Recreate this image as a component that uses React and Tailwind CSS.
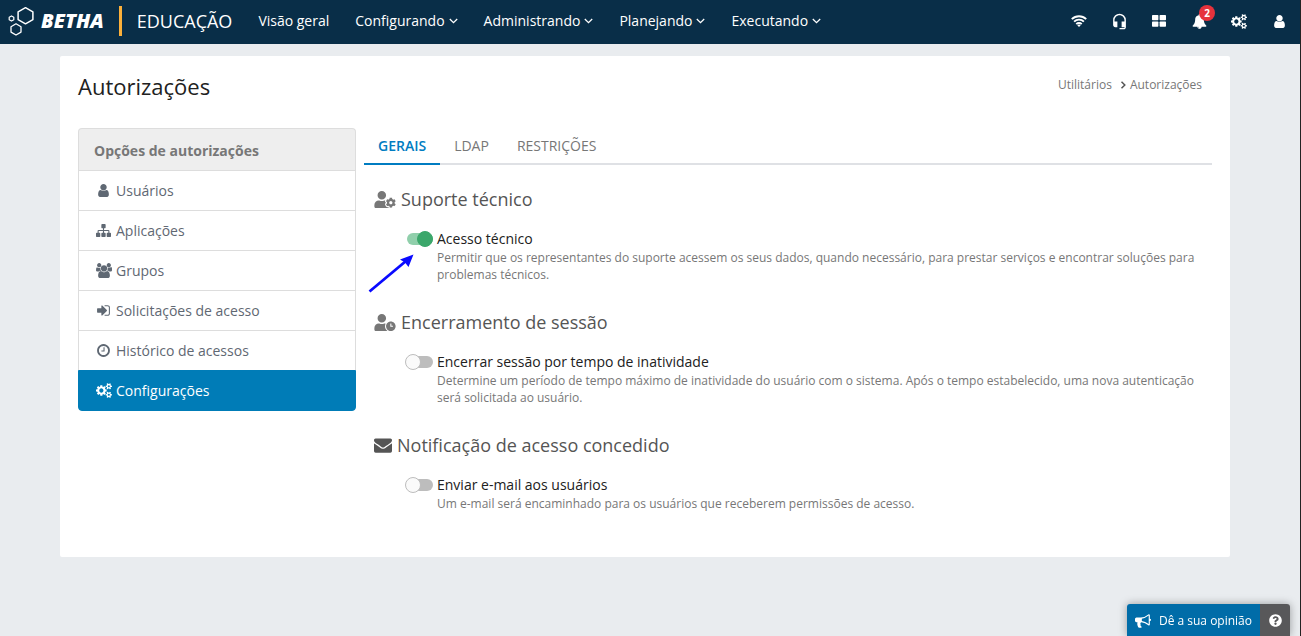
import { FaQuestionCircle, FaUserClock, FaUserCog } from 'react-icons/fa'
import { MdHeadsetMic } from 'react-icons/md'

const paths = {
  user: 'M1536 1399q0 109-62.5 187t-150.5 78h-854q-88 0-150.5-78t-62.5-187q0-85 8.5-160.5t31.5-152 58.5-131 94-89 134.5-34.5q131 128 313 128t313-128q76 0 134.5 34.5t94 89 58.5 131 31.5 152 8.5 160.5zm-256-887q0 159-112.5 271.5t-271.5 112.5-271.5-112.5-112.5-271.5 112.5-271.5 271.5-112.5 271.5 112.5 112.5 271.5z',
  sitemap: 'M1792 1248v320q0 40-28 68t-68 28h-320q-40 0-68-28t-28-68v-320q0-40 28-68t68-28h96v-192h-512v192h96q40 0 68 28t28 68v320q0 40-28 68t-68 28h-320q-40 0-68-28t-28-68v-320q0-40 28-68t68-28h96v-192h-512v192h96q40 0 68 28t28 68v320q0 40-28 68t-68 28h-320q-40 0-68-28t-28-68v-320q0-40 28-68t68-28h96v-192q0-52 38-90t90-38h512v-192h-96q-40 0-68-28t-28-68v-320q0-40 28-68t68-28h320q40 0 68 28t28 68v320q0 40-28 68t-68 28h-96v192h512q52 0 90 38t38 90v192h96q40 0 68 28t28 68z',
  users: 'M529 896q-162 5-265 128h-134q-82 0-138-40.5t-56-118.5q0-353 124-353 6 0 43.5 21t97.5 42.5 119 21.5q67 0 133-23-5 37-5 66 0 159 93 293zm1071 637q0 120-73 189.5t-194 69.5h-874q-121 0-194-69.5t-73-189.5q0-53 3.5-103.5t14-109 26.5-108.5 43-97.5 62-81 85.5-53.5 111.5-20q10 0 43 21.5t73 48 107 48 135 21.5 135-21.5 107-48 73-48 43-21.5q61 0 111.5 20t85.5 53.5 62 81 43 97.5 26.5 108.5 14 109 3.5 103.5zm-1024-1277q0 106-75 181t-181 75-181-75-75-181 75-181 181-75 181 75 75 181zm704 384q0 159-112.5 271.5t-271.5 112.5-271.5-112.5-112.5-271.5 112.5-271.5 271.5-112.5 271.5 112.5 112.5 271.5zm576 225q0 78-56 118.5t-138 40.5h-134q-103-123-265-128 93-134 93-293 0-29-5-66 66 23 133 23 59 0 119-21.5t97.5-42.5 43.5-21q124 0 124 353zm-128-609q0 106-75 181t-181 75-181-75-75-181 75-181 181-75 181 75 75 181z',
  signIn: 'M1312 896q0 26-19 45l-544 544q-19 19-45 19t-45-19-19-45v-288h-448q-26 0-45-19t-19-45v-384q0-26 19-45t45-19h448v-288q0-26 19-45t45-19 45 19l544 544q19 19 19 45zm352-352v704q0 119-84.5 203.5t-203.5 84.5h-320q-13 0-22.5-9.5t-9.5-22.5q0-4-1-20t-.5-26.5 3-23.5 10-19.5 20.5-6.5h320q66 0 113-47t47-113v-704q0-66-47-113t-113-47h-312l-11.5-1-11.5-3-8-5.5-7-9-2-13.5q0-4-1-20t-.5-26.5 3-23.5 10-19.5 20.5-6.5h320q119 0 203.5 84.5t84.5 203.5z',
  clock: 'M1024 544v448q0 14-9 23t-23 9h-320q-14 0-23-9t-9-23v-64q0-14 9-23t23-9h224v-352q0-14 9-23t23-9h64q14 0 23 9t9 23zm416 352q0-148-73-273t-198-198-273-73-273 73-198 198-73 273 73 273 198 198 273 73 273-73 198-198 73-273zm224 0q0 209-103 385.5t-279.5 279.5-385.5 103-385.5-103-279.5-279.5-103-385.5 103-385.5 279.5-279.5 385.5-103 385.5 103 279.5 279.5 103 385.5z',
  cogs: 'M896 896q0-106-75-181t-181-75-181 75-75 181 75 181 181 75 181-75 75-181zm768 512q0-52-38-90t-90-38-90 38-38 90q0 53 37.5 90.5t90.5 37.5 90.5-37.5 37.5-90.5zm0-1024q0-52-38-90t-90-38-90 38-38 90q0 53 37.5 90.5t90.5 37.5 90.5-37.5 37.5-90.5zm-384 421v185q0 10-7 19.5t-16 10.5l-155 24q-11 35-32 76 34 48 90 115 7 11 7 20 0 12-7 19-23 30-82.5 89.5t-78.5 59.5q-11 0-21-7l-115-90q-37 19-77 31-11 108-23 155-7 24-30 24h-186q-11 0-20-7.5t-10-17.5l-23-153q-34-10-75-31l-118 89q-7 7-20 7-11 0-21-8-144-133-144-160 0-9 7-19 10-14 41-53t47-61q-23-44-35-82l-152-24q-10-1-17-9.5t-7-19.5v-185q0-10 7-19.5t16-10.5l155-24q11-35 32-76-34-48-90-115-7-11-7-20 0-12 7-20 22-30 82-89t79-59q11 0 21 7l115 90q34-18 77-32 11-108 23-154 7-24 30-24h186q11 0 20 7.5t10 17.5l23 153q34 10 75 31l118-89q8-7 20-7 11 0 21 8 144 133 144 160 0 8-7 19-12 16-42 54t-45 60q23 48 34 82l152 23q10 2 17 10.5t7 19.5zm640 533v140q0 16-149 31-12 27-30 52 51 113 51 138 0 4-4 7-122 71-124 71-8 0-46-47t-52-68q-20 2-30 2t-30-2q-14 21-52 68t-46 47q-2 0-124-71-4-3-4-7 0-25 51-138-18-25-30-52-149-15-149-31v-140q0-16 149-31 13-29 30-52-51-113-51-138 0-4 4-7 4-2 35-20t59-34 30-16q8 0 46 46.5t52 67.5q20-2 30-2t30 2q51-71 92-112l6-2q4 0 124 70 4 3 4 7 0 25-51 138 17 23 30 52 149 15 149 31zm0-1024v140q0 16-149 31-12 27-30 52 51 113 51 138 0 4-4 7-122 71-124 71-8 0-46-47t-52-68q-20 2-30 2t-30-2q-14 21-52 68t-46 47q-2 0-124-71-4-3-4-7 0-25 51-138-18-25-30-52-149-15-149-31v-140q0-16 149-31 13-29 30-52-51-113-51-138 0-4 4-7 4-2 35-20t59-34 30-16q8 0 46 46.5t52 67.5q20-2 30-2t30 2q51-71 92-112l6-2q4 0 124 70 4 3 4 7 0 25-51 138 17 23 30 52 149 15 149 31z',
  bell: 'M912 1696q0-16-16-16-59 0-101.5-42.5t-42.5-101.5q0-16-16-16t-16 16q0 73 51.5 124.5t124.5 51.5q16 0 16-16zm816-288q0 52-38 90t-90 38h-448q0 106-75 181t-181 75-181-75-75-181h-448q-52 0-90-38t-38-90q50-42 91-88t85-119.5 74.5-158.5 50-206 19.5-260q0-152 117-282.5t307-158.5q-8-19-8-39 0-40 28-68t68-28 68 28 28 68q0 20-8 39 190 28 307 158.5t117 282.5q0 139 19.5 260t50 206 74.5 158.5 85 119.5 91 88z',
  bullhorn: 'M1664 640q53 0 90.5 37.5t37.5 90.5-37.5 90.5-90.5 37.5v384q0 52-38 90t-90 38q-417-347-812-380-58 19-91 66t-31 100.5 40 92.5q-20 33-23 65.5t6 58 33.5 55 48 50 61.5 50.5q-29 58-111.5 83t-168.5 11.5-132-55.5q-7-23-29.5-87.5t-32-94.5-23-89-15-101 3.5-98.5 22-110.5h-122q-66 0-113-47t-47-113v-192q0-66 47-113t113-47h480q435 0 896-384 52 0 90 38t38 90v384zm-128 604v-954q-394 302-768 343v270q377 42 768 341z',
  envelope: 'M1792 710v794q0 66-47 113t-113 47h-1472q-66 0-113-47t-47-113v-794q44 49 101 87 362 246 497 345 57 42 92.5 65.5t94.5 48 110 24.5h2q51 0 110-24.5t94.5-48 92.5-65.5q170-123 498-345 57-39 100-87zm0-294q0 79-49 151t-122 123q-376 261-468 325-10 7-42.5 31t-54 38.5-52 32.5-57.5 27-50 9h-2q-23 0-50-9t-57.5-27-52-32.5-54-38.5-42.5-31q-91-64-262-182.5t-205-142.5q-62-42-117-115.5t-55-136.5q0-78 41.5-130t118.5-52h1472q65 0 112.5 47t47.5 113z',
}

const boxes = { users: '-64 0 1920 1792', cogs: '0 0 1920 1792' }

function Icon({ name, className = 'w-[15px] h-[15px]' }) {
  return (
    <svg viewBox={boxes[name] || '0 0 1792 1792'} className={`shrink-0 ${className}`} fill="currentColor" aria-hidden="true">
      <path d={paths[name]} />
    </svg>
  )
}

function Wifi() {
  return (
    <svg viewBox="0 0 16 12" className="w-4 h-3" fill="none" stroke="currentColor" strokeWidth="1.9" aria-hidden="true">
      <path d="M.8 4.2a10.200 10.200 0 0 1 14.400 0M3.100 6.700a6.900 6.900 0 0 1 9.800 0M5.300 9.200a3.800 3.800 0 0 1 5.400 0" />
      <path d="M8 12 6.300 10.300a2.400 2.400 0 0 1 3.400 0z" fill="currentColor" stroke="none" />
    </svg>
  )
}

function Tiles() {
  return (
    <svg viewBox="0 0 14 12" className="w-[14px] h-3" fill="currentColor" aria-hidden="true">
      <rect width="6.4" height="5.3" rx=".7" />
      <rect x="7.6" width="6.4" height="5.3" rx=".7" />
      <rect y="6.5" width="6.4" height="5.3" rx=".7" />
      <rect x="7.6" y="6.5" width="6.4" height="5.3" rx=".7" />
    </svg>
  )
}

function Chevron() {
  return (
    <svg viewBox="0 0 9 6" className="w-[9px] h-[6px]" fill="none" stroke="currentColor" strokeWidth="1.3" aria-hidden="true">
      <path d="M.8 1l3.7 3.6L8.2 1" />
    </svg>
  )
}

function Logo() {
  return (
    <a href="#" className="flex items-center gap-[6px]">
      <svg viewBox="0 0 27 30" className="w-[27px] h-[30px]" fill="none" stroke="currentColor" strokeWidth="1.5" strokeLinejoin="round" aria-hidden="true">
        <path d="M17.5 1.700l7.400 4.200v7.700l-7.400 4.200-7.400-4.200V5.900z" />
        <path d="M8 17.800l5 2.900v5.400l-5 2.900-5-2.900v-5.400z" strokeWidth="1.3" />
        <path d="M3.5 9.900l2.300 1.300v2.600l-2.300 1.300-2.300-1.300v-2.600z" strokeWidth="1.2" />
      </svg>
      <span className="text-xl leading-6 font-extrabold italic">BETHA</span>
    </a>
  )
}

const menus = ['Configurando', 'Administrando', 'Planejando', 'Executando']

function Header() {
  return (
    <header className="h-11 bg-[#092e48] text-white flex items-center pl-2 pr-px pb-[2px]">
      <Logo />
      <span className="w-[3px] h-[30px] bg-[#fbb03b] ml-[15px]" />
      <span className="text-[18px] leading-6 ml-[15px]">EDUCAÇÃO</span>
      <nav className="flex items-center gap-[26px] ml-[26px] text-sm">
        <a href="#">Visão geral</a>
        {menus.map((m) => (
          <button key={m} className="flex items-center gap-1">{m}<Chevron /></button>
        ))}
      </nav>
      <div className="flex ml-auto">
        <button aria-label="Conexão" className="w-10 h-10 flex items-center justify-center"><Wifi /></button>
        <button aria-label="Suporte" className="w-10 h-10 flex items-center justify-center"><MdHeadsetMic className="w-[17px] h-[17px]" /></button>
        <button aria-label="Aplicativos" className="w-10 h-10 flex items-center justify-center"><Tiles /></button>
        <button aria-label="Notificações" className="relative w-10 h-10 flex items-center justify-center">
          <Icon name="bell" />
          <span className="absolute top-1 right-1 w-4 h-4 rounded-full bg-[#e6323c] text-[10px] leading-4 font-bold">2</span>
        </button>
        <button aria-label="Ajustes" className="w-10 h-10 flex items-center justify-center"><Icon name="cogs" className="w-4 h-[15px]" /></button>
        <button aria-label="Perfil" className="w-10 h-10 flex items-center justify-center"><Icon name="user" /></button>
      </div>
    </header>
  )
}

const options = [
  { icon: 'user', label: 'Usuários' },
  { icon: 'sitemap', label: 'Aplicações' },
  { icon: 'users', label: 'Grupos' },
  { icon: 'signIn', label: 'Solicitações de acesso' },
  { icon: 'clock', label: 'Histórico de acessos' },
  { icon: 'cogs', label: 'Configurações', active: true },
]

function Sidebar() {
  return (
    <aside className="w-[278px] shrink-0 text-sm text-[#5f6873]">
      <h2 className="h-[42px] flex items-center px-[15px] pt-[2px] bg-[#eee] border border-b-0 border-[#ddd] rounded-t font-bold text-[#777]">Opções de autorizações</h2>
      <ul>
        {options.map((o) => (
          <li key={o.label}>
            <a
              href="#"
              className={o.active
                ? 'flex items-center gap-1 h-[41px] px-4 border border-[#007cb7] bg-[#007cb7] text-white rounded-b'
                : 'flex items-center gap-1 h-10 px-4 border border-b-0 border-[#ddd]'}
            >
              <span className="w-[17px] flex justify-center">
                <Icon name={o.icon} className={o.icon === 'cogs' || o.icon === 'users' ? 'w-4 h-[15px]' : 'w-[15px] h-[15px]'} />
              </span>
              {o.label}
            </a>
          </li>
        ))}
      </ul>
    </aside>
  )
}

function Toggle({ id, checked }) {
  return (
    <span className="relative w-7 h-4 shrink-0 flex items-center justify-end">
      <input id={id} type="checkbox" role="switch" defaultChecked={checked} className="peer appearance-none w-[26px] h-3 rounded-full bg-[#bdbdbd] checked:bg-[#90cfab]" />
      <span className="pointer-events-none absolute left-0 top-0 w-4 h-4 rounded-full border border-[#bdbdbd] bg-[#fafafa] peer-checked:left-3 peer-checked:border-[#3ba76b] peer-checked:bg-[#3ba76b]" />
    </span>
  )
}

function Arrow() {
  return (
    <svg viewBox="0 0 46 40" className="absolute left-1 top-6 w-[46px] h-10" aria-hidden="true">
      <path d="M1.5 38.500L38 8" stroke="#0a0aff" strokeWidth="2.800" />
      <path d="M45.500 1.500L40.500 14 37 9.500 32 6.500z" fill="#0a0aff" />
    </svg>
  )
}

function Section({ icon, title, id, label, text, checked, arrow }) {
  return (
    <section>
      <h3 className="flex items-center gap-[5px] h-6 pl-[10px] text-lg text-[#555]">{icon}{title}</h3>
      <div className="relative flex gap-1 mt-[18px] pl-[41px]">
        <div className="h-5 flex items-center"><Toggle id={id} checked={checked} /></div>
        <div>
          <label htmlFor={id} className="block text-sm leading-5 text-[#212121]">{label}</label>
          <p className="text-xs leading-[17px] text-[#777]">{text}</p>
        </div>
        {arrow && <Arrow />}
      </div>
    </section>
  )
}

function Panel() {
  return (
    <div className="flex-1 min-w-0">
      <div role="tablist" className="flex h-[37px] border-b-2 border-[#dfe1e5] text-sm text-[#777]">
        <button role="tab" aria-selected="true" className="h-[37px] px-[14px] border-b-2 border-[#007cc1] font-semibold text-[#007cc1]">GERAIS</button>
        <button role="tab" aria-selected="false" className="h-[37px] px-[14px] border-b-2 border-transparent">LDAP</button>
        <button role="tab" aria-selected="false" className="h-[37px] px-[14px] border-b-2 border-transparent">RESTRIÇÕES</button>
      </div>
      <div className="flex flex-col gap-[27px] pt-[22px]">
        <Section
          icon={<FaUserCog className="w-[22px] h-[17px] text-[#777]" />}
          title="Suporte técnico"
          id="acesso"
          label="Acesso técnico"
          text="Permitir que os representantes do suporte acessem os seus dados, quando necessário, para prestar serviços e encontrar soluções para problemas técnicos."
          checked
          arrow
        />
        <Section
          icon={<FaUserClock className="w-[22px] h-[17px] text-[#777]" />}
          title="Encerramento de sessão"
          id="sessao"
          label="Encerrar sessão por tempo de inatividade"
          text="Determine um período de tempo máximo de inatividade do usuário com o sistema. Após o tempo estabelecido, uma nova autenticação será solicitada ao usuário."
        />
        <Section
          icon={<Icon name="envelope" className="w-[18px] h-[18px]" />}
          title="Notificação de acesso concedido"
          id="email"
          label="Enviar e-mail aos usuários"
          text="Um e-mail será encaminhado para os usuários que receberem permissões de acesso."
        />
      </div>
    </div>
  )
}

export default function App() {
  return (
    <div className="min-h-screen bg-[#e9ecef] border-r border-[#222] font-['Open_Sans',sans-serif] text-[#212121]">
      <Header />
      <main className="pt-3 pr-[10px]">
        <div className="max-w-[1170px] mx-auto bg-white rounded-[2px] px-[18px] pt-[15px] pb-[45px]">
          <div className="flex justify-between items-start">
            <h1 className="text-[22px] leading-[30px]">Autorizações</h1>
            <nav className="flex items-center gap-2 pt-1 pr-[10px] text-xs leading-5 text-[#777]">
              <a href="#">Utilitários</a>
              <span className="flex items-center gap-1">
                <svg viewBox="0 0 6 8" className="w-[6px] h-2" fill="none" stroke="#555" strokeWidth="1.5" aria-hidden="true"><path d="M1.5.8L4.800 4 1.500 7.200" /></svg>
                Autorizações
              </span>
            </nav>
          </div>
          <div className="flex items-start gap-2 mt-[27px]">
            <Sidebar />
            <Panel />
          </div>
        </div>
      </main>
      <div className="fixed bottom-0 right-[11px] h-8 flex rounded-t-[3px] overflow-hidden shadow-[0_0_8px_rgba(0,0,0,0.35)] text-xs text-white">
        <button className="flex items-center gap-2 px-2 pt-[2px] bg-[#006ca8]"><Icon name="bullhorn" className="w-4 h-4" />Dê a sua opinião</button>
        <button aria-label="Ajuda" className="w-[30px] flex items-center justify-center bg-[#58585a]"><FaQuestionCircle className="w-[13px] h-[13px]" /></button>
      </div>
    </div>
  )
}
